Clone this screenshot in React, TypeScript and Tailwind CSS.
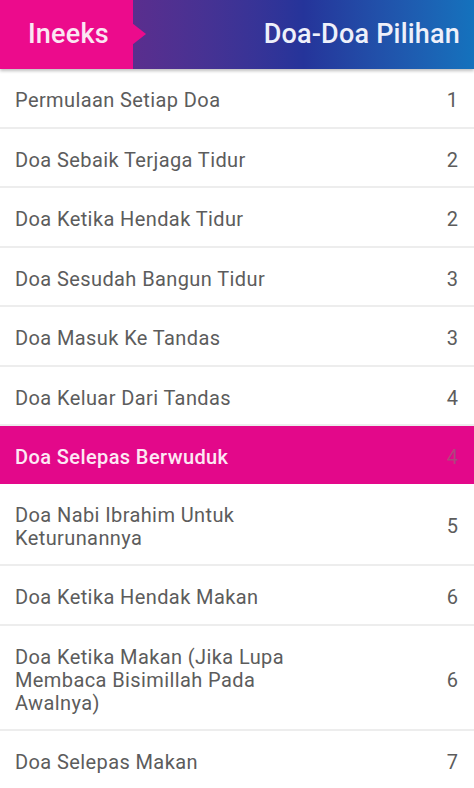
import React from "react";

const items: { t: string; n: number; active?: boolean }[] = [
  { t: "Permulaan Setiap Doa", n: 1 },
  { t: "Doa Sebaik Terjaga Tidur", n: 2 },
  { t: "Doa Ketika Hendak Tidur", n: 2 },
  { t: "Doa Sesudah Bangun Tidur", n: 3 },
  { t: "Doa Masuk Ke Tandas", n: 3 },
  { t: "Doa Keluar Dari Tandas", n: 4 },
  { t: "Doa Selepas Berwuduk", n: 4, active: true },
  { t: "Doa Nabi Ibrahim Untuk Keturunannya", n: 5 },
  { t: "Doa Ketika Hendak Makan", n: 6 },
  { t: "Doa Ketika Makan (Jika Lupa Membaca Bisimillah Pada Awalnya)", n: 6 },
  { t: "Doa Selepas Makan", n: 7 },
];

export default function App() {
  return (
    <div className="w-[474px] h-[788px] overflow-hidden bg-white" style={{ fontFamily: "Roboto, 'Liberation Sans', sans-serif" }}>
      <div className="relative flex h-[69px] shadow-[0_2px_3px_rgba(0,0,0,0.25)] z-10">
        <div className="relative w-[133px] bg-[#ec0b8c] flex items-center pl-[28px]">
          <span className="text-[27px] text-[#fbe6f3] font-medium tracking-[0.2px]">Ineeks</span>
          <div className="absolute left-[132px] top-[23px] w-0 h-0 border-y-[11px] border-y-transparent border-l-[14px] border-l-[#ec0b8c]" />
        </div>
        <div className="flex-1 bg-gradient-to-r from-[#5a2e8e] via-[#25349a] to-[#1472bd] flex items-center justify-end pr-[14px]">
          <span className="text-[27px] text-[#eef0fa] font-medium tracking-[0.2px]">Doa-Doa Pilihan</span>
        </div>
      </div>
      <div className="flex flex-col">
        {items.map((it, i) => (
          <div
            key={i}
            className={`flex items-center justify-between pl-[15px] pr-[16px] pt-[20px] pb-[14.5px] ${
              it.active ? "bg-[#e3088a]" : "border-b-2 border-[#ededed]"
            }`}
          >
            <span
              className={`w-[300px] text-[20px] leading-[23px] tracking-[0.4px] ${
                it.active ? "text-[#fde8f4] font-medium" : "text-[#5c5c5c]"
              }`}
            >
              {it.t}
            </span>
            <span className={`text-[20px] leading-[23px] ${it.active ? "text-[#b0457e]" : "text-[#5c5c5c]"}`}>{it.n}</span>
          </div>
        ))}
      </div>
    </div>
  );
}
